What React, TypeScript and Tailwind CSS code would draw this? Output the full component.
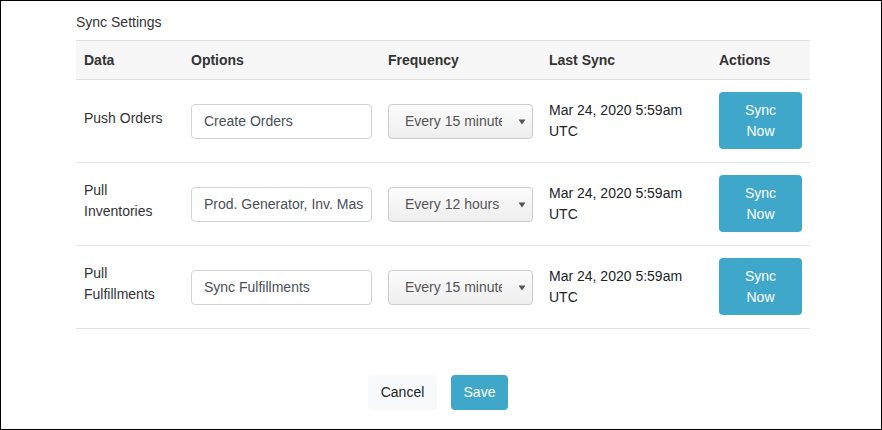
import React from 'react'

type Row = { data: string[]; option: string; frequency: string; lastSync: string }

const ROWS: Row[] = [
  { data: ['Push Orders'], option: 'Create Orders', frequency: 'Every 15 minutes', lastSync: 'Mar 24, 2020 5:59am UTC' },
  { data: ['Pull', 'Inventories'], option: 'Prod. Generator, Inv. Mas', frequency: 'Every 12 hours', lastSync: 'Mar 24, 2020 5:59am UTC' },
  { data: ['Pull', 'Fulfillments'], option: 'Sync Fulfillments', frequency: 'Every 15 minutes', lastSync: 'Mar 24, 2020 5:59am UTC' },
]

const COLS = 'grid grid-cols-[107px_197px_161px_170px_99px]'

function FakeSelect({ value }: { value: string }) {
  return (
    <div className="relative h-[35px] w-full rounded-[4px] border border-[#cccccc] bg-gradient-to-b from-[#fcfcfc] to-[#eeeeee] overflow-hidden">
      <div className="h-full w-full pl-[16px] pr-[30px] flex items-center">
        <span className="block overflow-hidden whitespace-nowrap text-[#555555]">{value}</span>
      </div>
      {/* caret */}
      <svg className="absolute right-[6px] top-[14px]" width="8" height="6" viewBox="0 0 8 6">
        <path d="M0.5 0.5 L7.5 0.5 L4 5.5 Z" fill="#555555" />
      </svg>
    </div>
  )
}

export default function App() {
  return (
    <div
      className="w-[882px] h-[430px] border border-black bg-white text-[14px] leading-[21px] text-[#333333] pl-[75px]"
      style={{ fontFamily: '"Liberation Sans", Arial, sans-serif' }}
    >
      <div className="pt-[11px] pb-[7px]">Sync Settings</div>

      <div className="w-[734px]">
        {/* header */}
        <div className={`${COLS} h-[40px] bg-[#f7f7f7] border-y border-[#dddddd] font-bold`}>
          {['Data', 'Options', 'Frequency', 'Last Sync', 'Actions'].map(h => (
            <div key={h} className="px-[8px] flex items-center">{h}</div>
          ))}
        </div>

        {/* rows */}
        {ROWS.map((r, i) => (
          <div key={i} className={`${COLS} h-[83px] border-b border-[#e3e3e3]`}>
            <div className="px-[8px] flex items-center">
              <label className="mb-[6px]">
                {r.data.map(d => (
                  <div key={d}>{d}</div>
                ))}
              </label>
            </div>
            <div className="px-[8px] flex items-center">
              <div className="h-[35px] w-full rounded-[4px] border border-[#ced4da] bg-white pl-[12px] flex items-center overflow-hidden">
                <span className="whitespace-nowrap text-[#495057]">{r.option}</span>
              </div>
            </div>
            <div className="px-[8px] flex items-center">
              <FakeSelect value={r.frequency} />
            </div>
            <div className="px-[8px] flex items-center text-[#212529]">
              <div className="w-[140px]">{r.lastSync}</div>
            </div>
            <div className="px-[8px] flex items-center pb-[1px]">
              <button className="w-[83px] h-[57px] rounded-[4px] bg-[#3fa8ca] text-white leading-[21px]">
                Sync
                <br />
                Now
              </button>
            </div>
          </div>
        ))}
      </div>

      <div className="w-[734px] flex justify-center gap-[14px] mt-[46px] pr-[10px]">
        <button className="h-[35px] w-[69px] rounded-[4px] bg-[#f8f9fa] text-[#212529]">Cancel</button>
        <button className="h-[35px] w-[57px] rounded-[4px] bg-[#3fa8ca] text-white">Save</button>
      </div>
    </div>
  )
}
